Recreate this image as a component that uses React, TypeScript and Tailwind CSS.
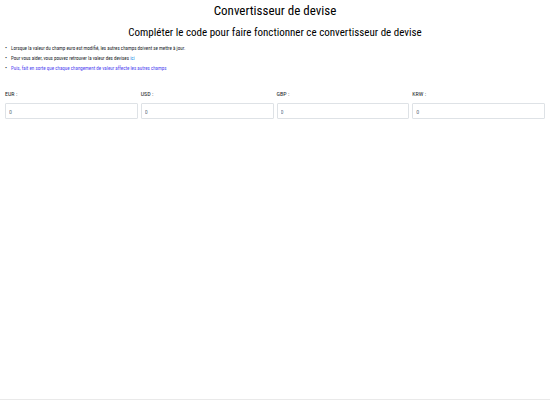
import type { ReactNode } from "react";

const currencies = ["EUR", "USD", "GBP", "KRW"];

function Instruction({ children }: { children: ReactNode }) {
  return (
    <li className="flex gap-1">
      <span aria-hidden="true" className="w-[2px] text-[6px]">
        •
      </span>
      <span>{children}</span>
    </li>
  );
}

function CurrencyField({ code }: { code: string }) {
  const id = `amount-${code.toLowerCase()}`;
  return (
    <div className="flex min-w-0 flex-col gap-1">
      <label htmlFor={id} className="text-[6px] leading-[10px]">
        {code} :
      </label>
      <input
        id={id}
        type="text"
        inputMode="decimal"
        placeholder="0"
        className="h-4 w-full rounded-[1px] border border-[#dee2e6] bg-white px-[3px] text-[6px] placeholder:text-[#6c757d]"
      />
    </div>
  );
}

export default function App() {
  return (
    <main className="flex min-h-screen flex-col border-b border-[#e9e9e9] bg-white px-[5px] font-['Roboto_Condensed','Roboto',sans-serif] text-[#212529]">
      <h1 className="text-center text-[13px] leading-[22px] font-normal text-black">
        Convertisseur de devise
      </h1>
      <h2 className="text-center text-[11px] leading-[21px] font-normal text-black">
        Compléter le code pour faire fonctionner ce convertisseur de devise
      </h2>
      <ul className="text-[5px] leading-[10px]">
        <Instruction>
          Lorsque la valeur du champ euro est modifié, les autres champs doivent
          se mettre à jour.
        </Instruction>
        <Instruction>
          Pour vous aider, vous pouvez retrouver la valeur des devises{" "}
          <a href="#devises" className="text-[#1e90e8]">
            ici
          </a>
        </Instruction>
        <Instruction>
          <span className="text-[#4f46f0]">
            Puis, fait en sorte que chaque changement de valeur affecte les
            autres champs
          </span>
        </Instruction>
      </ul>
      <form className="mt-4 grid grid-cols-4 gap-[3px]">
        {currencies.map((code) => (
          <CurrencyField key={code} code={code} />
        ))}
      </form>
    </main>
  );
}
